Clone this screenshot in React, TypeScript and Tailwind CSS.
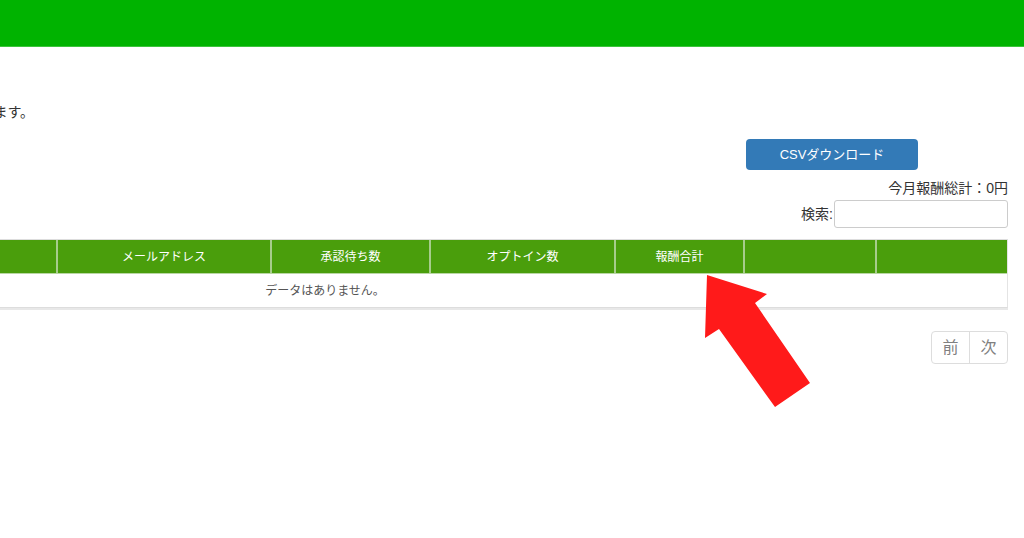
import React from "react";

const COLUMNS = [
  { label: "", w: "w-[415px]" },
  { label: "メールアドレス", w: "w-[214px]" },
  { label: "承認待ち数", w: "w-[159px]" },
  { label: "オプトイン数", w: "w-[185px]" },
  { label: "報酬合計", w: "w-[129px]" },
  { label: "", w: "w-[132px]" },
  { label: "", w: "flex-1" },
];

export default function App() {
  return (
    <div
      className="relative w-full h-[538px] overflow-hidden bg-white text-[#333]"
      style={{ fontFamily: "'Liberation Sans', 'Noto Sans CJK JP', sans-serif" }}
    >
      {/* top bar */}
      <div className="h-[47px] bg-[#00b300] border-b border-[#3cc43c]" />

      {/* intro sentence, cut off on the left */}
      <div className="w-[34px] flex justify-end whitespace-nowrap mt-[55px] text-[14px] leading-5">
        <p>こちらのページでは紹介者ごとの報酬を確認することができます。</p>
      </div>

      <div className="-ml-[358px] mr-[16px]">
        <div className="flex justify-end mt-[17px] mr-[90px]">
          <button className="w-[172px] h-[31px] rounded-[4px] bg-[#337ab7] text-white text-[13px]">
            CSVダウンロード
          </button>
        </div>

        <div className="flex justify-end mt-[8px] text-[14px] leading-5">今月報酬総計：0円</div>

        <div className="flex justify-end items-center mt-[2px] text-[14px]">
          <span className="mr-[1px]">検索:</span>
          <input className="w-[174px] h-[28px] border border-[#ccc] rounded-[3px] outline-none" />
        </div>

        {/* table */}
        <div className="mt-[11px] border border-[#ddd] border-r-[#e4e4e4]">
          <div className="flex h-[34px] bg-[#4a9e0c] border-b border-[#b9d7a4] text-white text-[12px]">
            {COLUMNS.map((c, i) => (
              <div
                key={i}
                className={`${c.w} flex items-center justify-center ${
                  i < COLUMNS.length - 1 ? "border-r-2 border-[#a7cd8c]" : ""
                }`}
              >
                {c.label}
              </div>
            ))}
          </div>
          <div className="h-[33px] flex items-center justify-center text-[12px] text-[#555]">
            データはありません。
          </div>
        </div>
        <div className="h-[2px] bg-[#e8e8e8]" />

        {/* pagination */}
        <div className="flex justify-end mt-[21px]">
          <div className="flex h-[33px] border border-[#ddd] rounded-[4px] text-[16px] text-[#808080]">
            <span className="w-[38px] flex items-center justify-center border-r border-[#ddd]">前</span>
            <span className="w-[37px] flex items-center justify-center">次</span>
          </div>
        </div>
      </div>

      {/* red arrow annotation */}
      <svg className="absolute left-0 top-0" width="1024" height="538" viewBox="0 0 1024 538">
        <polygon
          points="707,275 767,294 755,303 810,383 775,407 719,329 705,338"
          fill="#ff1a1a"
        />
      </svg>
    </div>
  );
}
